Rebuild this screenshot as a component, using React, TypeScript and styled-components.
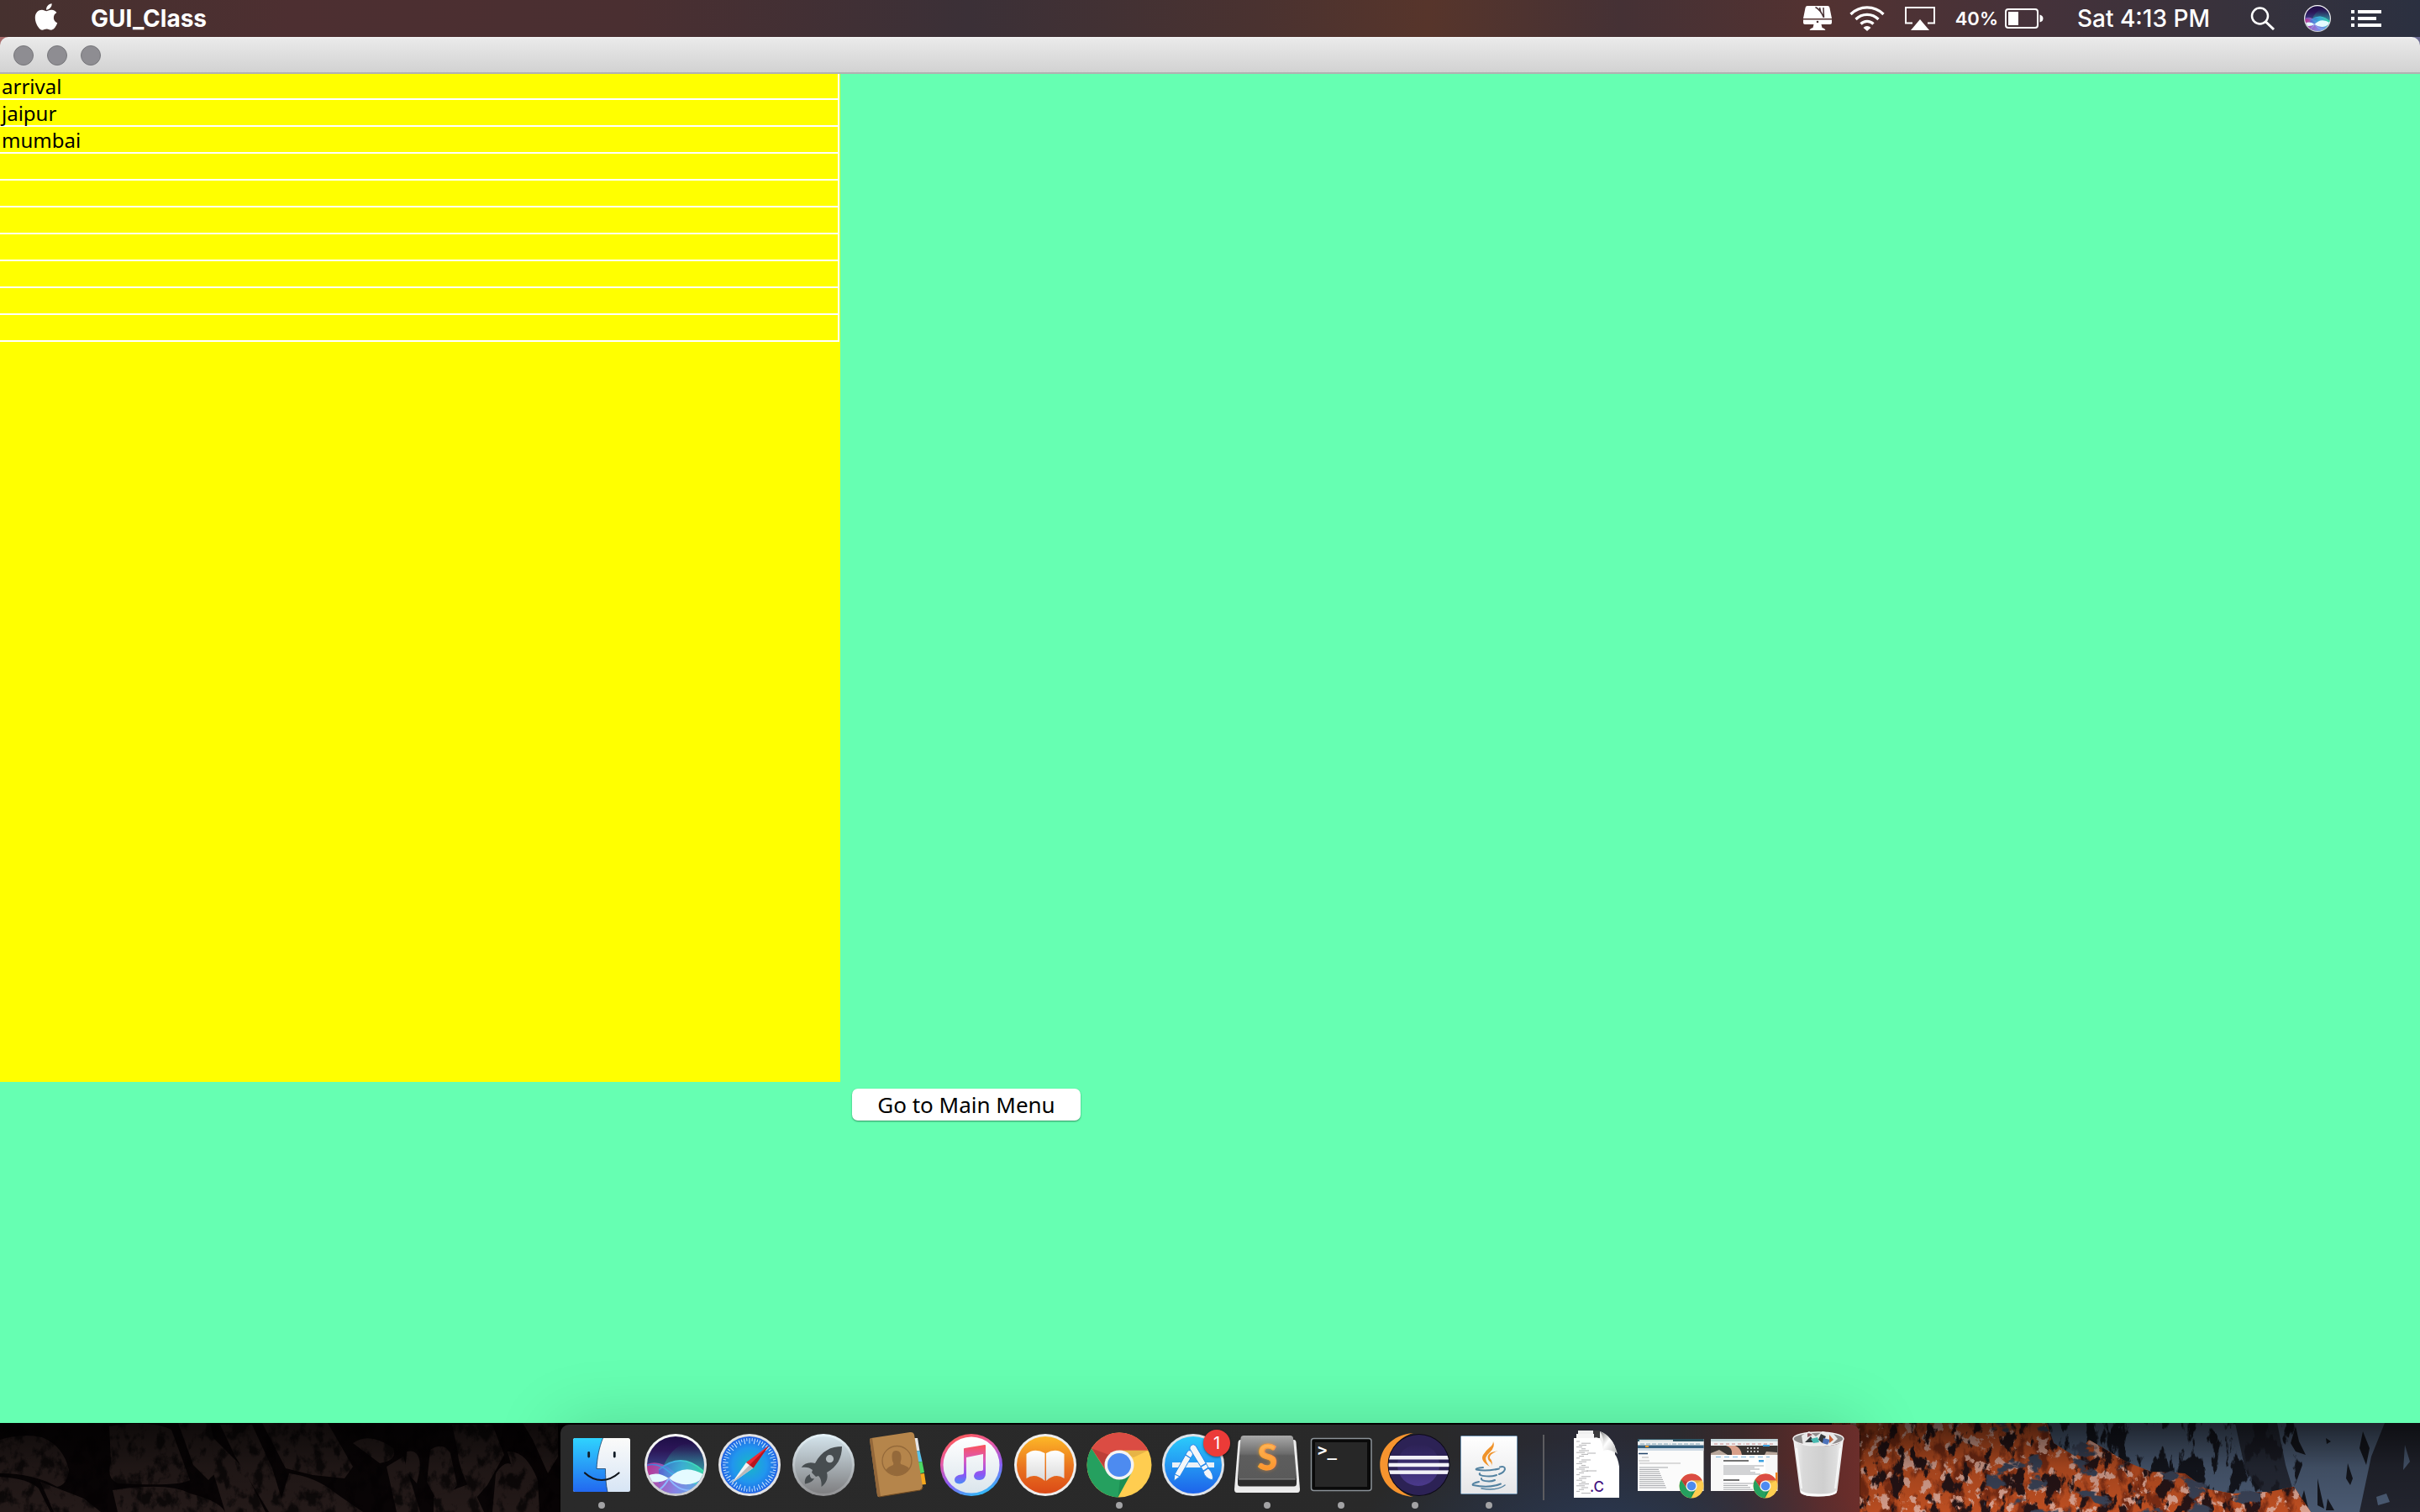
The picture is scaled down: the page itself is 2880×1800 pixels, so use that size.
import React from 'react';
import styled, { createGlobalStyle } from 'styled-components';
import { FaApple } from 'react-icons/fa';

const GlobalStyle = createGlobalStyle`
  *, *::before, *::after { box-sizing: border-box; }
  html, body { margin: 0; padding: 0; }
  body { background: #0b0808; }
  button { font: inherit; color: inherit; background: none; border: 0; margin: 0; padding: 0; }
`;

const systemFont = `Inter, 'Liberation Sans', sans-serif`;
const javaFont = `'Noto Sans', 'DejaVu Sans', sans-serif`;

const Screen = styled.div`
  display: flex;
  flex-direction: column;
  min-height: 100vh;
  overflow: hidden;
  font-family: ${systemFont};
`;

/* ---------- menu bar ---------- */

const MenuBar = styled.header`
  display: flex;
  align-items: center;
  justify-content: space-between;
  height: 44px;
  flex: none;
  padding: 0 46px 0 40px;
  color: #fff;
  background: linear-gradient(
    90deg,
    #46312f 0%, #4d2f31 12%, #4a2f31 26%, #3b3037 40%, #4a3230 52%,
    #57352b 59%, #453135 67%, #533231 75%, #45323a 84%, #38323c 92%, #2b3040 100%
  );
`;

const MenuGroup = styled.div`
  display: flex;
  align-items: center;
  height: 100%;
`;

const AppleButton = styled.button`
  display: flex;
  height: 40px;
  align-items: center;
  align-self: flex-start;
  width: 30px;
  justify-content: center;
  svg { width: 30px; height: 36px; }
`;

const AppName = styled.button`
  margin-left: 38px;
  font-size: 28px;
  line-height: 44px;
  font-weight: 700;
`;

const StatusButton = styled.button<{ $gap: number }>`
  display: flex;
  align-items: center;
  gap: 8px;
  height: 44px;
  margin-left: ${(p) => p.$gap}px;
  white-space: nowrap;
  svg { display: block; flex: none; }
`;

const BatteryText = styled.span`
  font-size: 22px;
  font-weight: 600;
`;

const ClockText = styled.span`
  font-size: 28px;
  font-weight: 500;
`;

/* ---------- window ---------- */

const Window = styled.main`
  display: flex;
  flex-direction: column;
  flex: 1;
  background: linear-gradient(90deg, #a86b6b, #6b6b92) 0 0 / 100% 20px no-repeat;
`;

const TitleBar = styled.div`
  display: flex;
  align-items: center;
  gap: 16px;
  height: 44px;
  flex: none;
  padding: 2px 16px 0;
  border-radius: 10px 10px 0 0;
  border-bottom: 2px solid #b1b1b1;
  background: linear-gradient(#f4f4f4 0, #e9e9e9 3px, #d2d2d2 100%);
`;

const TrafficLight = styled.button`
  width: 24px;
  height: 24px;
  border-radius: 50%;
  border: 1px solid #77777b;
  background: #8e8d92;
`;

const Content = styled.div`
  display: grid;
  flex: 1;
  grid-template-columns: minmax(0, 1000px) 1fr;
  grid-template-rows: auto 1fr;
  background: #66ffb2;
`;

const ListPanel = styled.section`
  min-height: 1200px;
  padding-right: 1px;
  background: #ffff00;
`;

const Table = styled.table`
  width: 100%;
  border-collapse: separate;
  border-spacing: 0;
`;

const Cell = styled.td`
  height: 32px;
  padding: 0 2px;
  border-right: 2px solid #fff;
  border-bottom: 2px solid #fff;
  font-family: ${javaFont};
  font-size: 24px;
  line-height: 29px;
  color: #000;
  tr:first-child > & { height: 31px; }
`;

const ButtonArea = styled.div`
  grid-column: 2;
  grid-row: 2;
  padding: 8px 14px;
`;

const MainMenuButton = styled.button`
  display: block;
  min-width: 272px;
  height: 38px;
  padding: 0 28px;
  border-radius: 7px;
  background: #fff;
  box-shadow: 0 1px 2px rgba(0, 60, 30, 0.55);
  font-family: ${javaFont};
  font-size: 26px;
  line-height: 36px;
  color: #000;
`;

/* ---------- desktop and dock ---------- */

const Desktop = styled.footer`
  position: relative;
  display: flex;
  justify-content: center;
  align-items: flex-end;
  height: 106px;
  flex: none;
  background: #070405;
`;

const Wallpaper = styled.svg`
  position: absolute;
  inset: 0;
  width: 100%;
  height: 100%;
`;

const Dock = styled.nav`
  position: relative;
  display: flex;
  height: 104px;
  padding: 4px 5px 0;
  border-radius: 10px 10px 0 0;
  background:
    radial-gradient(ellipse 300px 110px at 1250px 120%, rgba(42, 58, 84, 0.85), rgba(42, 58, 84, 0) 100%),
    linear-gradient(90deg, #2a2a2a 0, #292929 66%, #292a36 80%, #2b2a2f 86%, #3b292a 91%, #602b29 97%, #6b2e2b 100%);
  box-shadow: 0 0 80px rgba(0, 0, 0, 0.17), 0 0 2px rgba(0, 0, 0, 0.8);
`;

const DockItem = styled.button`
  position: relative;
  display: flex;
  flex-direction: column;
  align-items: center;
  justify-content: flex-start;
  width: 88px;
  height: 100px;
  flex: none;
  svg { display: block; flex: none; width: 88px; height: 88px; overflow: visible; }
`;

const RunningDot = styled.span`
  display: block;
  width: 8px;
  height: 8px;
  border-radius: 50%;
  background: #a3a3a5;
`;

const Badge = styled.span`
  position: absolute;
  top: 2px;
  right: 0;
  width: 32px;
  height: 32px;
  border-radius: 50%;
  background: #ec3b38;
  color: #fff;
  font-size: 20px;
  line-height: 32px;
  text-align: center;
  box-shadow: 0 1px 3px rgba(0, 0, 0, 0.5);
`;

const Separator = styled.div`
  width: 2px;
  height: 78px;
  margin: 8px 18px 0 20px;
  background: #5c5c60;
`;

/* ---------- status icons ---------- */

const DisplayIcon = () => (
  <svg width="36" height="30" viewBox="0 0 36 30" fill="#fff">
    <path d="M6 0h24q2 0 2.400 2l2.600 13H1L3.600 2Q4 0 6 0z" />
    <path d="M1 16.500h34V20q0 2-2 2H22.500l1 4q3 .3 4 3H8.500q1-2.700 4-3l1-4H3q-2 0-2-2z" />
    <path d="M15.500 1.500Q22 5 25.500 14M20.500 2L22 8M25 2L25.500 14" stroke="#4a3335" strokeWidth="1.500" fill="none" />
    <circle cx="18" cy="19" r="1.300" fill="#4a3335" />
  </svg>
);

const WifiIcon = () => (
  <svg width="42" height="30" viewBox="0 0 42 30" fill="none" stroke="#fff" strokeWidth="3.200">
    <path d="M1.500 10a27.500 27.500 0 0 1 39 0" />
    <path d="M7.500 16a19 19 0 0 1 27 0" />
    <path d="M13.500 21.500a10.600 10.600 0 0 1 15 0" />
    <path d="M16.500 26a6.300 6.300 0 0 1 9 0L21 30z" fill="#fff" stroke="none" />
  </svg>
);

const AirPlayIcon = () => (
  <svg width="36" height="28" viewBox="0 0 36 28">
    <path d="M9 19.500H1V1h34v18.500h-8" fill="none" stroke="#fff" strokeWidth="2" />
    <path d="M18 15l11 13H7z" fill="#fff" />
  </svg>
);

const BatteryIcon = () => (
  <svg width="46" height="24" viewBox="0 0 46 24">
    <rect x="1" y="1" width="38" height="22" rx="3" fill="none" stroke="#fff" strokeWidth="2" />
    <rect x="4" y="4" width="12" height="16" fill="#fff" />
    <path d="M41.500 7.500q4 1 4 4.500t-4 4.500z" fill="#fff" />
  </svg>
);

const SearchIcon = () => (
  <svg width="30" height="28" viewBox="0 0 30 28" fill="none" stroke="#fff" strokeWidth="2.500">
    <circle cx="11.500" cy="11" r="9.500" />
    <path d="M18.500 18L28 27" strokeWidth="3" />
  </svg>
);

const NotificationIcon = () => (
  <svg width="36" height="20" viewBox="0 0 36 20" fill="#fff">
    <path d="M0 0h4v4H0zM0 8h4v4H0zM0 16h4v4H0zM8 0h28v4H8zM8 8h22v4H8zM8 16h28v4H8z" />
  </svg>
);

/* ---------- dock icons ---------- */

const SiriArt = ({ id }: { id: string }) => (
  <>
    <defs>
      <linearGradient id={`${id}-bg`} x1="0" y1="0" x2="0" y2="1">
        <stop offset="0" stopColor="#150a3c" />
        <stop offset=".3" stopColor="#2c1658" />
        <stop offset=".6" stopColor="#3b4e93" />
        <stop offset="1" stopColor="#3f8ee6" />
      </linearGradient>
      <linearGradient id={`${id}-pink`} x1="0" y1="0" x2="1" y2="0">
        <stop offset="0" stopColor="#f32a93" />
        <stop offset=".5" stopColor="#a48cf2" />
        <stop offset="1" stopColor="#53d7f5" />
      </linearGradient>
      <linearGradient id={`${id}-teal`} x1="0" y1="0" x2="1" y2="0">
        <stop offset="0" stopColor="#3f6ad8" />
        <stop offset=".5" stopColor="#40bfe8" />
        <stop offset="1" stopColor="#3be8a4" />
      </linearGradient>
      <linearGradient id={`${id}-glow`} x1="0" y1="0" x2="0" y2="1">
        <stop offset="0" stopColor="#1fc39a" stopOpacity="0" />
        <stop offset="1" stopColor="#2bd6b1" stopOpacity=".65" />
      </linearGradient>
      <linearGradient id={`${id}-rim`} x1="0" y1="0" x2="0" y2="1">
        <stop offset="0" stopColor="#fff" />
        <stop offset="1" stopColor="#c9c9cd" />
      </linearGradient>
      <clipPath id={`${id}-clip`}><circle cx="44" cy="44" r="34" /></clipPath>
    </defs>
    <circle cx="44" cy="44" r="37" fill={`url(#${id}-rim)`} />
    <g clipPath={`url(#${id}-clip)`}>
      <rect width="88" height="88" fill={`url(#${id}-bg)`} />
      <path d="M30 44C44 14 66 12 80 28V60H30z" fill={`url(#${id}-glow)`} />
      <path d="M8 44Q24 36 42 52T80 62V90H8z" fill={`url(#${id}-pink)`} opacity=".7" />
      <path d="M24 50Q52 26 80 54V62Q50 44 24 66z" fill={`url(#${id}-teal)`} opacity=".75" />
      <path d="M8 45Q22 40 36 52T80 68M24 50Q52 26 80 54" fill="none" stroke={`url(#${id}-teal)`} strokeWidth="1.600" />
      <path d="M8 58Q22 50 36 60Q54 40 80 57Q58 76 36 60Q22 68 8 62z" fill="#e4fbff" />
      <path d="M36 60Q26 78 12 76M36 60Q50 80 74 72" stroke="#8cb9ff" strokeWidth="2" fill="none" />
    </g>
  </>
);

const ChromeArt = () => (
  <>
    <circle cx="44" cy="44" r="38.500" fill="#ffcd50" />
    <path d="M44 26.700H78.400A38.500 38.500 0 0 0 11 24.200L29 52.500z" fill="#db4c43" />
    <path d="M11 24.200A38.500 38.500 0 0 0 42.500 82.400L59 52.500H29z" fill="#25a05f" />
    <path d="M78.400 26.700H44L61 35z" fill="#cf9b3c" opacity=".5" />
    <path d="M11 24.200L27 47L32 32z" fill="#a93630" opacity=".6" />
    <path d="M42.500 82.400L58 53L45 61z" fill="#147b45" opacity=".5" />
    <circle cx="44" cy="44" r="17.500" fill="#f4f4f4" />
    <circle cx="44" cy="44" r="14" fill="#4d8bf0" />
  </>
);

const FinderIcon = () => (
  <svg viewBox="0 0 88 88">
    <defs>
      <linearGradient id="fd-blue" x1="0" y1="0" x2="0" y2="1">
        <stop offset="0" stopColor="#2fd3fe" /><stop offset="1" stopColor="#2268f0" />
      </linearGradient>
      <linearGradient id="fd-white" x1="0" y1="0" x2="0" y2="1">
        <stop offset="0" stopColor="#fbfbfa" /><stop offset="1" stopColor="#d7e5f5" />
      </linearGradient>
    </defs>
    <rect x="10" y="12" width="68" height="64" rx="2.500" fill="url(#fd-white)" />
    <path d="M12.500 12H45.500C41 23 38.500 36 38 48.500H48.500C48.500 58 49 67 51 76H12.500Q10 76 10 73.500V14.500Q10 12 12.500 12z" fill="url(#fd-blue)" />
    <path d="M45.500 12C41 23 38.500 36 38 48.500H48.500C48.500 58 49 67 51 76" fill="none" stroke="#1b3f66" strokeWidth=".8" />
    <path d="M28.700 29.500v4.500M59.300 29.500v4.500" stroke="#111c26" strokeWidth="2.800" strokeLinecap="round" />
    <path d="M24 53.500Q33 62 44 62T64.500 53.500" fill="none" stroke="#10161d" strokeWidth="2.200" strokeLinecap="round" />
  </svg>
);

const SafariIcon = () => (
  <svg viewBox="0 0 88 88">
    <defs>
      <radialGradient id="sf-sea">
        <stop offset="0" stopColor="#18b8c4" /><stop offset=".6" stopColor="#2196ee" /><stop offset="1" stopColor="#2163e4" />
      </radialGradient>
    </defs>
    <circle cx="44" cy="44" r="37" fill="#e2e2e4" />
    <circle cx="44" cy="44" r="34" fill="url(#sf-sea)" />
    {Array.from({ length: 60 }, (_, i) => (
      <path key={i} d={i % 2 ? 'M44 12v3.500' : 'M44 12v6.500'} transform={`rotate(${i * 6} 44 44)`} stroke="#c9e8ff" strokeWidth="1" />
    ))}
    <path d="M22.500 66L40 41L48.500 47.500z" fill="#f3f3f3" />
    <path d="M22.500 66L44 44L48.500 47.500z" fill="#b9b9bb" />
    <path d="M67 21L40 41L48.500 47.500z" fill="#ef2a35" />
    <path d="M67 21L44 44L48.500 47.500z" fill="#b8151f" />
  </svg>
);

const LaunchpadIcon = () => (
  <svg viewBox="0 0 88 88">
    <defs>
      <linearGradient id="lp-bg" x1="0" y1="0" x2="0" y2="1">
        <stop offset="0" stopColor="#d2e2ea" /><stop offset="1" stopColor="#7f7f81" />
      </linearGradient>
      <linearGradient id="lp-rim" x1="0" y1="0" x2="0" y2="1">
        <stop offset="0" stopColor="#e6f4fa" /><stop offset="1" stopColor="#8f8f91" />
      </linearGradient>
    </defs>
    <circle cx="44" cy="44" r="37" fill="url(#lp-rim)" />
    <circle cx="44" cy="44" r="34" fill="url(#lp-bg)" />
    <path d="M66 22C53 22 42 27 34 42C27 40 21 42 17.700 47C23 46 28 47 31 50L30 53L35 58L38 57C41 60 42 65 41.500 70C47 66 50 60 48 53C60 46 66 36 66 22z" fill="#474d50" />
    <path d="M28 55C23 57 21 62 22 66.500C26 66 31 64 33 60C30 61 27.500 59 28 55z" fill="#474d50" />
    <circle cx="51.500" cy="36.700" r="4.600" fill="#b3bbbf" />
  </svg>
);

const ContactsIcon = () => (
  <svg viewBox="0 0 88 88">
    <path d="M62 12l6 0 2.500 15-8 1z" fill="#e6e6e8" />
    <path d="M64 28l6.500-1 3 13-8 1z" fill="#5cc3ea" />
    <path d="M66 41l7.500-1 2.500 13-9 2z" fill="#4cd964" />
    <path d="M68 55l8-1 2 13-9 1z" fill="#f7a81c" />
    <path d="M13 12L59 5Q63 4.500 64 8L74 70Q74 73 71 74L22 82Q20.500 82 20 80L11 14Q11 12.500 13 12z" fill="#b5854b" />
    <path d="M11 14L20 80Q20.500 82 22 82L24 81.500L14 12L13 12Q11 12.500 11 14z" fill="#93673a" />
    <path d="M22 82L71 74Q74 73 74 70" fill="none" stroke="#6f4a22" strokeWidth="1.200" />
    <circle cx="43.500" cy="39" r="17.500" fill="none" stroke="#94693a" strokeWidth="1.300" />
    <path d="M30 50Q33 46 39 44Q40 42 38 39Q36 27 42 27Q49 26 48.500 37Q47 41 48 43Q55 45 58 48Q53 56 44 56.500Q36 56 30 50z" fill="#94693a" />
  </svg>
);

const ITunesIcon = () => (
  <svg viewBox="0 0 88 88">
    <defs>
      <linearGradient id="it-rim" x1=".3" y1="0" x2=".7" y2="1">
        <stop offset="0" stopColor="#fb5a55" /><stop offset=".3" stopColor="#ea5aa4" />
        <stop offset=".65" stopColor="#8a5cf5" /><stop offset="1" stopColor="#29c4f8" />
      </linearGradient>
      <linearGradient id="it-note" x1="0" y1="0" x2="0" y2="1">
        <stop offset="0" stopColor="#fb5158" /><stop offset=".4" stopColor="#d95ac0" />
        <stop offset=".75" stopColor="#8b55f4" /><stop offset="1" stopColor="#4c8bf7" />
      </linearGradient>
      <linearGradient id="it-bg" x1="0" y1="0" x2="0" y2="1">
        <stop offset="0" stopColor="#fff" /><stop offset="1" stopColor="#dbe5ec" />
      </linearGradient>
    </defs>
    <circle cx="44" cy="44" r="37" fill="url(#it-rim)" />
    <circle cx="44" cy="44" r="33.500" fill="url(#it-bg)" />
    <path d="M35 25Q35 24 36 24L60 20Q61 20 61 21V54Q61 61 54 62Q47 62 47 57Q48 51 55 51Q58 51 58 49V31L38 35V59Q37 66 30 66.500Q23.500 66 24 61Q25 56 32 55.500Q35 55.500 35 53z" fill="url(#it-note)" />
  </svg>
);

const IBooksIcon = () => (
  <svg viewBox="0 0 88 88">
    <defs>
      <linearGradient id="ib-bg" x1="0" y1="0" x2="0" y2="1">
        <stop offset="0" stopColor="#fdb827" /><stop offset=".55" stopColor="#e9721f" /><stop offset="1" stopColor="#db4a17" />
      </linearGradient>
      <linearGradient id="ib-page" x1="0" y1="0" x2="0" y2="1">
        <stop offset="0" stopColor="#fff" /><stop offset="1" stopColor="#dadada" />
      </linearGradient>
    </defs>
    <circle cx="44" cy="44" r="37" fill="#eee" />
    <circle cx="44" cy="44" r="34" fill="url(#ib-bg)" />
    <path d="M21.500 31Q31 23 43.500 30V63Q32 53 21.500 60z" fill="url(#ib-page)" />
    <path d="M66.500 31Q57 23 45 30V63Q56 53 66.500 60z" fill="url(#ib-page)" />
  </svg>
);

const ChromeIcon = () => <svg viewBox="0 0 88 88"><ChromeArt /></svg>;

const AppStoreIcon = () => (
  <svg viewBox="0 0 88 88">
    <defs>
      <linearGradient id="as-bg" x1="0" y1="0" x2="0" y2="1">
        <stop offset="0" stopColor="#2bcbfb" /><stop offset="1" stopColor="#1d63ea" />
      </linearGradient>
    </defs>
    <circle cx="44" cy="44" r="37" fill="#dfe3e8" />
    <circle cx="44" cy="44" r="34" fill="url(#as-bg)" />
    <rect x="19" y="41" width="50" height="6" fill="#eaf1f8" />
    <g stroke="#2588ea" strokeWidth="1">
      <path d="M37 28q3-3 6 0.500q1 2 0 4L28 58l-6-3z" fill="#f4f6f9" />
      <path d="M22 55l6 3-7 5z" fill="#f4f6f9" />
      <path d="M41 21q3-3 6 0L62 47l-6 4-16-26q-.5-2 1-4z" fill="#f4f6f9" />
      <path d="M56 52l6-4q7 7 5 14q-9-2-11-10z" fill="#f4f6f9" />
    </g>
    <path d="M35 32l6 4M53 46l7-4" stroke="#2588ea" strokeWidth="1.500" />
  </svg>
);

const SublimeIcon = () => (
  <svg viewBox="0 0 88 88">
    <defs>
      <linearGradient id="sb-top" x1="0" y1="0" x2="0" y2="1">
        <stop offset="0" stopColor="#a9a9a9" /><stop offset=".42" stopColor="#6b6b6b" />
        <stop offset=".46" stopColor="#5d5d5d" /><stop offset="1" stopColor="#5a5a5a" />
      </linearGradient>
      <linearGradient id="sb-s" x1="0" y1="0" x2="0" y2="1">
        <stop offset="0" stopColor="#ffbe62" /><stop offset="1" stopColor="#fb8c20" />
      </linearGradient>
      <filter id="sb-glow" x="-50%" y="-50%" width="200%" height="200%"><feGaussianBlur stdDeviation="2.500" /></filter>
    </defs>
    <path d="M12 14H76Q78 14 78.500 17L83 73Q83 77 80 77H8Q5 77 5 73L9.500 17Q10 14 12 14z" fill="#ececec" />
    <path d="M9 57V66Q9 69.500 12 69.500H76Q79 69.500 79 66V57z" fill="#2c2c2c" />
    <path d="M16 9H71.500Q74.500 9 75 12L79 58Q79 61 76 61H12Q9 61 9 58L12.500 12Q13 9 16 9z" fill="url(#sb-top)" />
    <path d="M10 61H78" stroke="#8a8a8a" strokeWidth="1" />
    <g fontFamily="Lato, sans-serif" fontWeight="900" fontSize="42" textAnchor="middle">
      <text x="44" y="50" fill="#ff9a32" opacity=".6" filter="url(#sb-glow)" aria-hidden="true">S</text>
      <text x="44" y="50" fill="url(#sb-s)" stroke="#fb9c38" strokeWidth="1">S</text>
    </g>
  </svg>
);

const TerminalIcon = () => (
  <svg viewBox="0 0 88 88">
    <rect x="8.500" y="12.500" width="71.500" height="62" rx="3" fill="#0a0a0a" stroke="#8b9298" strokeWidth="1.500" />
    <rect x="13" y="17" width="62" height="53" fill="#272727" />
    <text x="16" y="33" fontFamily="'DejaVu Sans Mono', monospace" fontWeight="700" fontSize="19" fill="#fff">&gt;_</text>
  </svg>
);

const EclipseIcon = () => (
  <svg viewBox="0 0 88 88">
    <defs>
      <linearGradient id="ec-moon" x1="0" y1="0" x2="0" y2="1">
        <stop offset="0" stopColor="#2c2255" /><stop offset="1" stopColor="#4b3a8c" />
      </linearGradient>
      <clipPath id="ec-clip"><circle cx="48.500" cy="44" r="36" /></clipPath>
    </defs>
    <path d="M42 6C-11 10-11 78 42 82C4 72 4 16 42 6z" fill="#f7942e" />
    <circle cx="48.500" cy="44" r="37" fill="#0d0a18" />
    <g clipPath="url(#ec-clip)">
      <rect width="88" height="88" fill="#2c2255" />
      <circle cx="48" cy="44" r="25" fill="url(#ec-moon)" />
      <rect x="10" y="33" width="78" height="4.500" fill="#f2f1f7" />
      <rect x="10" y="41.700" width="78" height="4.500" fill="#f2f1f7" />
      <rect x="10" y="50.400" width="78" height="4.500" fill="#f2f1f7" />
    </g>
  </svg>
);

const JavaIcon = () => (
  <svg viewBox="0 0 88 88">
    <defs>
      <linearGradient id="jv-bg" x1="0" y1="0" x2="0" y2="1">
        <stop offset="0" stopColor="#fff" /><stop offset="1" stopColor="#e6e6e8" />
      </linearGradient>
    </defs>
    <rect x="10.500" y="9.500" width="67" height="69" rx="1" fill="url(#jv-bg)" stroke="#6d93b3" />
    <path d="M49 16Q52 22 45 29Q38 35 41 40Q43 44 45 46Q33 39 37 32Q40 27 45 23Q49 20 49 16z" fill="#f0932a" />
    <path d="M55 27Q44 31 45 36Q50 40 46 47Q49 42 44 39Q40 33 47 29z" fill="#f0932a" />
    <g fill="none" stroke="#5382a1" strokeWidth="2" strokeLinecap="round">
      <path d="M37 47Q27 48 29 49.500Q40 52 56 48.500" />
      <path d="M33 54Q31 57 44 57.500Q49 57.500 53 56" />
      <path d="M35 60Q34 63 44 63.500Q48 63.500 51 62" />
      <path d="M57 46.500Q63 45 63 49Q62 53 56 55" />
      <path d="M32 64Q23 66 25 68Q44 72 58 66.500" />
      <path d="M35 72Q54 75 63 68" strokeWidth="1.500" />
    </g>
  </svg>
);

const SourceFileIcon = () => (
  <svg viewBox="0 0 88 88">
    <defs>
      <linearGradient id="src-curl" x1="0" y1="0" x2="1" y2="1">
        <stop offset="0" stopColor="#888" /><stop offset=".45" stopColor="#fff" /><stop offset="1" stopColor="#b5b5b5" />
      </linearGradient>
    </defs>
    <path d="M22 3H46Q60 8 66 22V40H22z" fill="#efefef" />
    <path d="M40 3h8v9h-8z" fill="#3a3a3c" />
    <path d="M20 7H41V14H20z" fill="#f5f5f5" />
    <path d="M17 12H40Q50 8 52 26Q68 24 71 46V83H17z" fill="#fff" />
    <path d="M48 4Q63 9 69 31Q61 24 52 27Q54 12 48 4z" fill="url(#src-curl)" />
    <g stroke="#a9a9ab" strokeWidth=".9">
      {Array.from({ length: 29 }, (_, i) => {
        const x = 20 + ((i * 5) % 3) * 3;
        return <path key={i} d={`M${x} ${16 + i * 2.2}h${4 + ((i * 7) % 9)}`} />;
      })}
      <path d="M33 30h10M32 51h12" />
    </g>
    <text x="36" y="76" fontFamily="Inter, sans-serif" fontWeight="500" fontSize="17" fill="#43127f">.C</text>
  </svg>
);

const PageLines = ({ x, y, rows, step, max }: { x: number; y: number; rows: number; step: number; max: number }) => (
  <g stroke="#9b9da1" strokeWidth=".9">
    {Array.from({ length: rows }, (_, i) => (
      <path key={i} d={`M${x} ${y + i * step}h${max - ((i * 11) % Math.round(max * 0.35))}`} />
    ))}
  </g>
);

const BrowserDocsIcon = () => (
  <svg viewBox="0 0 88 88">
    <rect x="5" y="13" width="78.500" height="62" fill="#fbfbfb" />
    <rect x="5" y="13" width="78.500" height="3" fill="#2e5564" />
    <rect x="7" y="14" width="40" height="2" fill="#d4dadc" />
    <rect x="5" y="16" width="78.500" height="4.500" fill="#eef0f1" />
    <path d="M8 19h36M46 19h34" stroke="#8ab" strokeWidth="1" strokeDasharray="5 2" />
    <rect x="5" y="20.500" width="78.500" height="3.500" fill="#35617f" />
    <rect x="14" y="21" width="4" height="2" fill="#e79a2d" />
    <rect x="5" y="24" width="78.500" height="3" fill="#cfdae4" />
    <path d="M6 30.500h11" stroke="#26476b" strokeWidth="1.500" />
    <path d="M10 35h8M6 39h13M7 42h49" stroke="#aaa" strokeWidth=".8" />
    <PageLines x={7} y={47} rows={11} step={2.4} max={34} />
    <g transform="translate(52.500 52.500) scale(.375)"><ChromeArt /></g>
  </svg>
);

const BrowserProfileIcon = () => (
  <svg viewBox="0 0 88 88">
    <rect x="4" y="13" width="79.500" height="62" fill="#f8f8f8" />
    <rect x="19" y="32" width="50" height="43" fill="#fff" />
    <rect x="4" y="13" width="79.500" height="3" fill="#bcd0d5" />
    <rect x="4" y="16" width="79.500" height="5" fill="#eef1f2" />
    <path d="M8 19h36M46 19h34" stroke="#c88" strokeWidth="1" strokeDasharray="4 3" />
    <rect x="4" y="21" width="79.500" height="11" fill="#3a3634" />
    <path d="M22 21q8 2 7 11h12q-1-8-8-11z" fill="#d9a08a" />
    <path d="M4 30l10-4 10 6H4zM70 28l13 1v3H68z" fill="#b9a79b" />
    <path d="M47 24h16M47 28h14" stroke="#ddd" strokeWidth="1.500" strokeDasharray="2 2" />
    <rect x="66" y="20" width="8" height="2" fill="#3ba0df" />
    <path d="M10 34.500h64" stroke="#7ab6dd" strokeWidth="1" strokeDasharray="6 4" />
    <rect x="61" y="38" width="6" height="2.500" fill="#3ba0df" />
    <path d="M19 39h30M19 62h19" stroke="#444" strokeWidth="1.300" />
    <PageLines x={19} y={45} rows={6} step={2} max={48} />
    <PageLines x={19} y={66} rows={4} step={2.4} max={40} />
    <rect x="81" y="53" width="2.500" height="13" fill="#f0811f" />
    <g transform="translate(52.500 52.500) scale(.375)"><ChromeArt /></g>
  </svg>
);

const TrashIcon = () => (
  <svg viewBox="0 0 88 88">
    <defs>
      <linearGradient id="tr-body" x1="0" y1="0" x2="1" y2="0">
        <stop offset="0" stopColor="#f5f5f5" /><stop offset=".2" stopColor="#d9d9d9" />
        <stop offset=".6" stopColor="#cfcfcf" /><stop offset=".85" stopColor="#ddd" /><stop offset="1" stopColor="#fafafa" />
      </linearGradient>
    </defs>
    <ellipse cx="44" cy="13" rx="30" ry="7.500" fill="#8f8b8b" />
    <path d="M24 9l9-5 8 6 8-6 13 3 5 6-9 8H26z" fill="#e9e9e9" />
    <path d="M28 17l7-7 4 7zM47 7l6 3-4 8-5-4z" fill="#34383b" />
    <path d="M35 13l8-2 2 6-7 1z" fill="#47b9b0" />
    <path d="M50 12l8 2-3 6-6-2z" fill="#4e73ba" />
    <path d="M57 8l5 6-5 4z" fill="#c6643c" />
    <path d="M31 5l6 3-6 3z" fill="#8d5a60" />
    <path d="M14 13Q17 21 44 21.500T74 13L66.500 75Q64 81 44 81.500T22 75z" fill="url(#tr-body)" />
    <path d="M23 74Q26 78 44 78.500T65.500 74L66 77Q62 81.500 44 81.500T22.500 77z" fill="#fff" opacity=".9" />
    <path d="M18 24L24 72M70 24L64 72" stroke="#fff" strokeWidth="2" opacity=".7" />
    <ellipse cx="44" cy="13" rx="30" ry="8" fill="none" stroke="#f2f2f2" strokeWidth="1.500" />
  </svg>
);

const SiriIcon = () => <svg viewBox="0 0 88 88"><SiriArt id="siri" /></svg>;

/* ---------- mountain wallpaper ---------- */

interface PatchFilterProps {
  id: string;
  frequency: string;
  seed: number;
  rgb: [number, number, number];
  gain: number;
  cut: number;
}

/* Irregular patches of one colour: noise cut off at a level, kept inside the shape it is used on. */
const PatchFilter = ({ id, frequency, seed, rgb, gain, cut }: PatchFilterProps) => (
  <filter id={id} x="0" y="0" width="100%" height="100%" colorInterpolationFilters="sRGB">
    <feTurbulence type="fractalNoise" baseFrequency={frequency} numOctaves={5} seed={seed} />
    <feColorMatrix
      values={`0 0 0 0 ${rgb[0] / 255}  0 0 0 0 ${rgb[1] / 255}  0 0 0 0 ${rgb[2] / 255}  ${gain} 0 0 0 ${-gain * cut}`}
    />
    <feComposite in2="SourceGraphic" operator="in" />
  </filter>
);

const sunlit = 'M2180 0H2436L2444 24L2470 40L2486 20L2510 34L2530 46L2560 58L2600 60L2624 78L2656 84L2700 82L2730 76L2750 106H2180z';

const MountainWallpaper = () => (
  <Wallpaper viewBox="0 0 2880 106" preserveAspectRatio="xMidYMax slice" aria-hidden="true">
    <defs>
      <PatchFilter id="wp-rock" frequency=".07 .05" seed={8} rgb={[4, 2, 3]} gain={5} cut={0.48} />
      <PatchFilter id="wp-rust" frequency=".05 .03" seed={33} rgb={[122, 44, 20]} gain={6} cut={0.48} />
      <PatchFilter id="wp-dark" frequency=".06 .035" seed={14} rgb={[38, 20, 22]} gain={12} cut={0.55} />
      <PatchFilter id="wp-snow" frequency=".08 .07" seed={47} rgb={[216, 160, 142]} gain={12} cut={0.57} />
      <PatchFilter id="wp-blue" frequency=".03 .05" seed={61} rgb={[58, 66, 86]} gain={12} cut={0.6} />
      <PatchFilter id="wp-pines" frequency=".06 .025" seed={5} rgb={[20, 22, 30]} gain={14} cut={0.51} />
      <linearGradient id="wp-top" x1="0" y1="0" x2="0" y2="1">
        <stop offset="0" stopColor="#000" stopOpacity=".6" />
        <stop offset=".5" stopColor="#000" stopOpacity=".15" />
        <stop offset="1" stopColor="#000" stopOpacity="0" />
      </linearGradient>
    </defs>

    <rect width="720" height="106" fill="#080405" />
    <g fill="#241a19">
      <path d="M0 20Q26 12 50 17Q76 28 82 56Q80 74 68 76Q40 60 0 60z" />
      <path d="M0 64Q34 66 46 78L60 106H0z" />
      <path d="M48 70Q80 82 100 90L120 106H64z" />
      <path d="M130 4Q180-4 204 8L226 68Q214 76 140 72Q126 66 132 46z" />
      <path d="M134 80Q200 70 226 84Q260 92 268 106H140z" />
      <path d="M212 0H250L262 54L248 68L230 50z" />
      <path d="M252 16L290 54L316 106H268L254 60z" />
      <path d="M262 2H300L324 54L340 106H320L280 40z" />
      <path d="M312 0H390L420 52L410 66L372 62L340 54z" />
      <path d="M344 60Q376 64 400 84L432 106H330z" />
      <path d="M420 24Q440 10 468 30Q474 44 452 48z" />
      <path d="M460 52L480 40L500 106H472z" />
      <path d="M484 34Q500 30 500 54L496 72L482 56z" />
      <path d="M512 32Q528 22 536 36L544 74L524 100L508 70z" />
      <path d="M538 2H586L600 38L580 74L566 90Q546 60 544 30z" />
      <path d="M590 60Q606 36 616 60L624 106H586z" />
      <path d="M604 34Q626 32 640 68L642 106H624z" />
      <path d="M622 0H664V40L652 60L634 20z" />
      <path d="M516 88L560 72L576 106H516z" />
    </g>
    <rect width="720" height="106" filter="url(#wp-rock)" opacity=".7" />

    <rect x="2180" width="700" height="106" fill="#4a5a72" />
    <path d="M2420 0H2730L2740 50L2720 106H2420z" filter="url(#wp-pines)" />
    <path d="M2660 0h50l10 50 12 40-20 16-40-50z" fill="#1b1d26" opacity=".8" />
    <path d="M2808 106l14-66 16-40h42v106z" fill="#22242e" />
    <path d="M2862 26l6 20-8 10zM2828 88l12-4 4 10-14 4z" fill="#4a5a72" />
    <path d="M2732 4l4 18 8 16-12-4-6-10zM2794 48l6 18-3 8-5-8zM2758 66l8 36-8-4zM2742 80l8 34h-18zM2770 90l8 14h-10zM2768 18l6 4-5 3zM2812 10l8 20-4 20-8-20z" fill="#14161d" />

    <path d={sunlit} fill="#bd4f22" />
    <path d={sunlit} filter="url(#wp-rust)" />
    <path d={sunlit} filter="url(#wp-snow)" />
    <path d={sunlit} filter="url(#wp-dark)" />
    <path d="M2370 0H2436L2510 34L2600 60L2690 84V106H2360z" filter="url(#wp-blue)" />
    <rect width="2880" height="106" fill="url(#wp-top)" />
  </Wallpaper>
);

/* ---------- data ---------- */

const places = ['arrival', 'jaipur', 'mumbai', '', '', '', '', '', '', ''];

interface DockEntry {
  name: string;
  Icon: React.FC;
  running?: boolean;
  badge?: string;
}

const apps: DockEntry[] = [
  { name: 'Finder', Icon: FinderIcon, running: true },
  { name: 'Siri', Icon: SiriIcon },
  { name: 'Safari', Icon: SafariIcon },
  { name: 'Launchpad', Icon: LaunchpadIcon },
  { name: 'Contacts', Icon: ContactsIcon },
  { name: 'iTunes', Icon: ITunesIcon },
  { name: 'iBooks', Icon: IBooksIcon },
  { name: 'Chrome', Icon: ChromeIcon, running: true },
  { name: 'App Store', Icon: AppStoreIcon, badge: '1' },
  { name: 'Sublime Text', Icon: SublimeIcon, running: true },
  { name: 'Terminal', Icon: TerminalIcon, running: true },
  { name: 'Eclipse', Icon: EclipseIcon, running: true },
  { name: 'Java', Icon: JavaIcon, running: true },
];

const documents: DockEntry[] = [
  { name: 'Source files', Icon: SourceFileIcon },
  { name: 'Browser window, documents', Icon: BrowserDocsIcon },
  { name: 'Browser window, profile', Icon: BrowserProfileIcon },
  { name: 'Trash', Icon: TrashIcon },
];

const DockButton = ({ name, Icon, running, badge }: DockEntry) => (
  <DockItem type="button" aria-label={name}>
    <Icon />
    {running && <RunningDot />}
    {badge && <Badge>{badge}</Badge>}
  </DockItem>
);

export default function App() {
  return (
    <Screen>
      <GlobalStyle />
      <MenuBar>
        <MenuGroup>
          <AppleButton type="button" aria-label="Apple menu"><FaApple /></AppleButton>
          <AppName type="button">GUI_Class</AppName>
        </MenuGroup>
        <MenuGroup>
          <StatusButton type="button" $gap={0} aria-label="Cleaner"><DisplayIcon /></StatusButton>
          <StatusButton type="button" $gap={20} aria-label="Wi-Fi"><WifiIcon /></StatusButton>
          <StatusButton type="button" $gap={24} aria-label="AirPlay"><AirPlayIcon /></StatusButton>
          <StatusButton type="button" $gap={24}>
            <BatteryText>40%</BatteryText>
            <BatteryIcon />
          </StatusButton>
          <StatusButton type="button" $gap={40}><ClockText>Sat 4:13 PM</ClockText></StatusButton>
          <StatusButton type="button" $gap={48} aria-label="Search"><SearchIcon /></StatusButton>
          <StatusButton type="button" $gap={34} aria-label="Siri">
            <svg width="32" height="32" viewBox="7 7 74 74"><SiriArt id="siri-menu" /></svg>
          </StatusButton>
          <StatusButton type="button" $gap={24} aria-label="Notifications"><NotificationIcon /></StatusButton>
        </MenuGroup>
      </MenuBar>

      <Window>
        <TitleBar>
          <TrafficLight type="button" aria-label="Close" />
          <TrafficLight type="button" aria-label="Minimize" />
          <TrafficLight type="button" aria-label="Zoom" />
        </TitleBar>
        <Content>
          <ListPanel>
            <Table>
              <tbody>
                {places.map((place, i) => (
                  <tr key={i}><Cell>{place}</Cell></tr>
                ))}
              </tbody>
            </Table>
          </ListPanel>
          <ButtonArea>
            <MainMenuButton type="button">Go to Main Menu</MainMenuButton>
          </ButtonArea>
        </Content>
      </Window>

      <Desktop>
        <MountainWallpaper />
        <Dock aria-label="Dock">
          {apps.map((app) => <DockButton key={app.name} {...app} />)}
          <Separator />
          {documents.map((doc) => <DockButton key={doc.name} {...doc} />)}
        </Dock>
      </Desktop>
    </Screen>
  );
}
